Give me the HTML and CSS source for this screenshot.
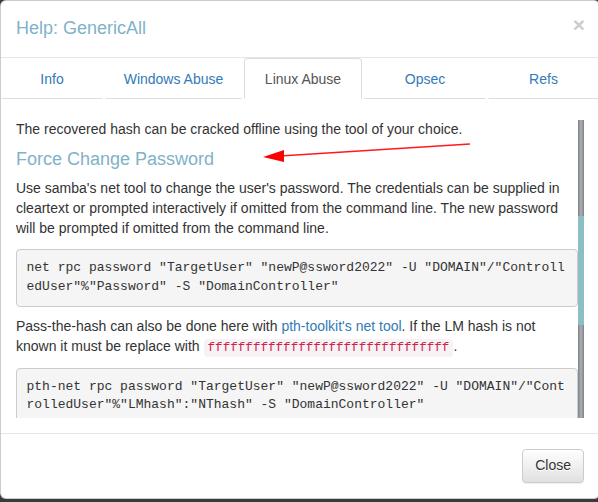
FILE: index.html
```html
<!DOCTYPE html>
<html>
<head>
<meta charset="utf-8">
<link rel="stylesheet" href="styles.css">
</head>
<body>
<div class="modal">
  <div class="modal-header">
    <h4 class="modal-title">Help: GenericAll</h4>
    <button class="close" type="button">×</button>
  </div>
  <ul class="tabs">
    <li class="tab"><a href="#">Info</a></li>
    <li class="tab"><a href="#">Windows Abuse</a></li>
    <li class="tab active"><a href="#">Linux Abuse</a></li>
    <li class="tab"><a href="#">Opsec</a></li>
    <li class="tab last"><a href="#">Refs</a></li>
  </ul>
  <div class="modal-body">
    <div class="scroll">
      <div class="content">
        <p>The recovered hash can be cracked offline using the tool of your choice.</p>
        <h4 class="section-title">Force Change Password</h4>
        <p>Use samba's net tool to change the user's password. The credentials can be supplied in cleartext or prompted interactively if omitted from the command line. The new password will be prompted if omitted from the command line.</p>
        <pre>net rpc password "TargetUser" "newP@ssword2022" -U "DOMAIN"/"ControlledUser"%"Password" -S "DomainController"</pre>
        <p>Pass-the-hash can also be done here with <a href="#">pth-toolkit's net tool</a>. If the LM hash is not known it must be replace with <code>ffffffffffffffffffffffffffffffff</code>.</p>
        <pre>pth-net rpc password "TargetUser" "newP@ssword2022" -U "DOMAIN"/"ControlledUser"%"LMhash":"NThash" -S "DomainController"</pre>
      </div>
      <div class="scrollbar"><div class="thumb"></div></div>
    </div>
  </div>
  <div class="modal-footer">
    <button class="btn" type="button">Close</button>
  </div>
</div>
<svg class="arrow" width="598" height="502" viewBox="0 0 598 502">
  <line x1="470" y1="144" x2="280" y2="156" stroke="#ff1a1a" stroke-width="1.3"/>
  <polygon points="263,157 284,150 284,162" fill="#ff0000"/>
</svg>
</body>
</html>
```
FILE: styles.css
```css
html, body {
  margin: 0;
  padding: 0;
}
body {
  background: #3a3a3a;
  font-family: "Liberation Sans", Arial, sans-serif;
  font-size: 14px;
  line-height: 1.42857;
  color: #333;
  height: 502px;
  overflow: hidden;
}
.modal {
  margin: 0;
  width: 600px;
  background: #fff;
  border: 1px solid rgba(0,0,0,.2);
  border-radius: 6px;
  box-sizing: border-box;
}
.modal-header {
  padding: 15px;
  border-bottom: 1px solid #e5e5e5;
  display: flex;
  justify-content: space-between;
  align-items: flex-start;
}
.modal-title {
  margin: 0;
  font-size: 18px;
  font-weight: normal;
  line-height: 1.42857;
  color: #7fb2c8;
}
.close {
  background: none;
  border: 0;
  padding: 0;
  margin-top: -2px;
  font-family: "Liberation Sans", Arial, sans-serif;
  font-size: 21px;
  font-weight: bold;
  line-height: 1;
  color: #000;
  opacity: .2;
  margin-right: -1px;
}
.tabs {
  list-style: none;
  margin: 0;
  padding: 0;
  display: grid;
  grid-template-columns: 104px 139px 120px 124px 1fr;
}
.tab a {
  display: block;
  text-align: center;
  padding: 10px 0 9px;
  line-height: 20px;
  color: #337ab7;
  text-decoration: none;
  border: 1px solid transparent;
  border-bottom-color: #ddd;
  border-radius: 4px 4px 0 0;
  margin-right: 2px;
}
.tab.last a {
  margin-right: 0;
}
.tab.active a {
  color: #555;
  border-color: #ddd;
  border-bottom-color: #fff;
}
.modal-body {
  padding: 21px 15px 15px 15px;
}
.scroll {
  display: flex;
  height: 298px;
  overflow: hidden;
}
.content {
  flex: 1;
  min-width: 0;
}
.content p {
  margin: 0 0 10px;
}
.content a {
  color: #337ab7;
  text-decoration: none;
}
.section-title {
  margin: 10px 0 10px;
  font-size: 18px;
  font-weight: normal;
  line-height: 1.1;
  color: #7fb2c8;
}
pre {
  margin: 0 0 10px;
  padding: 9px 9.5px;
  font-family: "Liberation Mono", "Courier New", monospace;
  font-size: 13px;
  line-height: 1.42857;
  color: #333;
  background: #f5f5f5;
  border: 1px solid #ccc;
  border-radius: 4px;
  white-space: pre-wrap;
  word-break: break-all;
}
code {
  font-family: "Liberation Mono", "Courier New", monospace;
  font-size: 90%;
  padding: 2px 4px;
  color: #c7254e;
  background: #f9f2f4;
  border-radius: 4px;
}
.scrollbar {
  width: 6px;
  height: 298px;
  flex: none;
  background: linear-gradient(to right, #7d8187, #a4a7ac 40%, #a4a7ac 60%, #7d8187);
  position: relative;
}
.thumb {
  position: absolute;
  left: 0;
  right: 0;
  top: 96px;
  height: 109px;
  background: #8bbfc3;
}
.modal-footer {
  padding: 15px;
  border-top: 1px solid #e5e5e5;
  display: flex;
  justify-content: flex-end;
}
.btn {
  font-family: "Liberation Sans", Arial, sans-serif;
  font-size: 14px;
  line-height: 1.42857;
  padding: 6px 12px;
  color: #333;
  border: 1px solid #ccc;
  border-radius: 4px;
  background: linear-gradient(to bottom, #fff 0, #e0e0e0 100%);
  text-shadow: 0 1px 0 #fff;
  box-shadow: inset 0 1px 0 rgba(255,255,255,.15), 0 1px 1px rgba(0,0,0,.075);
}
.arrow {
  position: absolute;
  left: 0;
  top: 0;
  pointer-events: none;
}
```
